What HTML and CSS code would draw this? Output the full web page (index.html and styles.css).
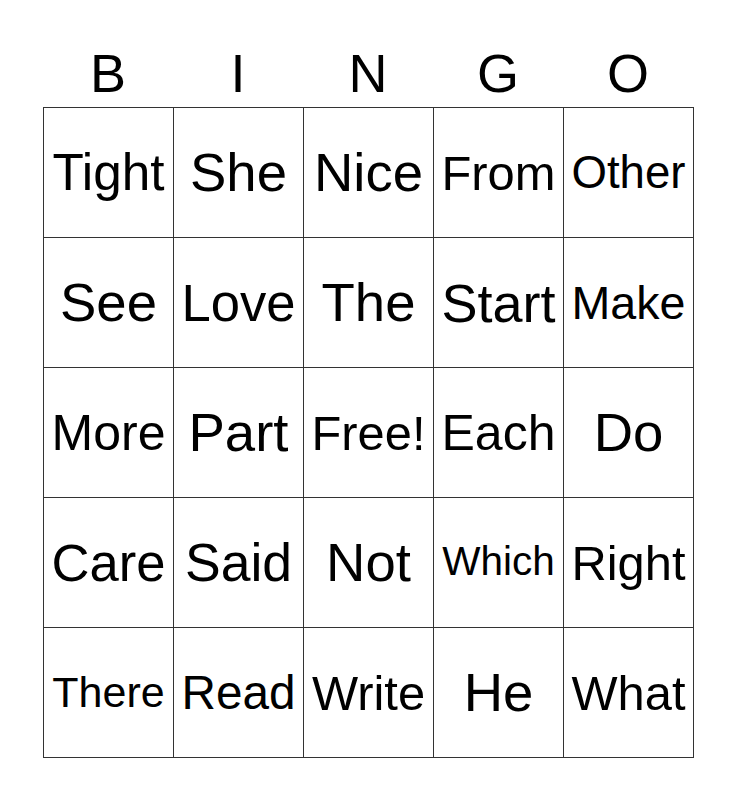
FILE: index.html
```html
<!DOCTYPE html>
<html>
<head>
<meta charset="utf-8">
<link rel="stylesheet" href="styles.css">
</head>
<body>
<div class="card">
  <div class="head">
    <div>B</div><div>I</div><div>N</div><div>G</div><div>O</div>
  </div>
  <div class="grid">
    <div class="cell"><span style="font-size:51.3px">Tight</span></div>
    <div class="cell"><span>She</span></div>
    <div class="cell"><span>Nice</span></div>
    <div class="cell"><span style="font-size:48.9px">From</span></div>
    <div class="cell"><span style="font-size:45.6px">Other</span></div>

    <div class="cell"><span>See</span></div>
    <div class="cell"><span style="font-size:52.6px">Love</span></div>
    <div class="cell"><span>The</span></div>
    <div class="cell"><span style="font-size:54px">Start</span></div>
    <div class="cell"><span style="font-size:46.6px">Make</span></div>

    <div class="cell"><span style="font-size:50px">More</span></div>
    <div class="cell"><span>Part</span></div>
    <div class="cell"><span style="font-size:48.8px">Free!</span></div>
    <div class="cell"><span style="font-size:50px">Each</span></div>
    <div class="cell"><span>Do</span></div>

    <div class="cell"><span style="font-size:52.6px">Care</span></div>
    <div class="cell"><span style="font-size:53.5px">Said</span></div>
    <div class="cell"><span>Not</span></div>
    <div class="cell"><span class="up" style="font-size:40.5px">Which</span></div>
    <div class="cell"><span style="font-size:48.8px">Right</span></div>

    <div class="cell"><span style="font-size:43px">There</span></div>
    <div class="cell"><span style="font-size:47.7px">Read</span></div>
    <div class="cell"><span style="font-size:48.9px">Write</span></div>
    <div class="cell"><span>He</span></div>
    <div class="cell"><span style="font-size:48.8px">What</span></div>
  </div>
</div>
</body>
</html>
```
FILE: styles.css
```css
html, body {
  margin: 0;
  padding: 0;
  background: #ffffff;
}
body {
  font-family: "Liberation Sans", Arial, sans-serif;
  color: #000000;
}
.card {
  width: 651px;
  margin-left: 43px;
  padding-top: 42px;
}
.head {
  display: grid;
  grid-template-columns: repeat(5, 130px);
  height: 65px;
  font-size: 54px;
  line-height: normal;
}
.head div {
  text-align: center;
}
.grid {
  display: grid;
  grid-template-columns: repeat(5, 129px);
  grid-auto-rows: 129px;
  gap: 1px;
  background: #333333;
  border: 1px solid #333333;
  width: 649px;
}
.cell {
  background: #ffffff;
  display: flex;
  align-items: center;
  justify-content: center;
  overflow: hidden;
  white-space: nowrap;
}
.cell span {
  font-size: 54.5px;
  line-height: normal;
}
.cell .up {
  margin-bottom: 3px;
}
```
